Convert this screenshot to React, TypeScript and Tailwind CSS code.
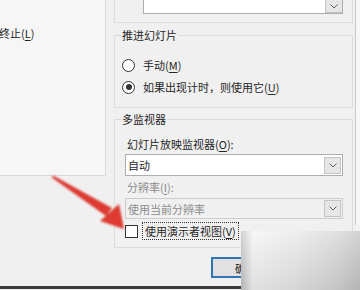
import { FC, ReactNode } from "react";

const font = {
  fontFamily: '"Microsoft YaHei", "Noto Sans CJK SC", "Noto Sans", sans-serif',
};

const Chevron: FC = () => (
  <svg width="8" height="5" viewBox="0 0 8 5" fill="none">
    <path d="M0.5 0.5 L4 4 L7.5 0.5" stroke="#606060" strokeWidth="1" />
  </svg>
);

// 下拉按钮
const DropButton: FC = () => (
  <div className="flex items-center justify-center w-[17px] h-[17px] bg-[#e6e6e6] border border-[#c4c4c4]">
    <Chevron />
  </div>
);

const Key: FC<{ k: string }> = ({ k }) => (
  <>
    (<span className="underline underline-offset-2">{k}</span>)
  </>
);

const Radio: FC<{ checked?: boolean; children: ReactNode }> = ({ checked, children }) => (
  <div className="flex items-center h-[20px]">
    <div className="flex items-center justify-center w-[13px] h-[13px] rounded-full border border-[#333] bg-white">
      {checked && <div className="w-[6px] h-[6px] rounded-full bg-[#333]" />}
    </div>
    <span className="ml-[8px] leading-[16px]">{children}</span>
  </div>
);

const App: FC = () => {
  return (
    <div
      className="relative w-[360px] h-[290px] overflow-hidden bg-[#f0f0f0] text-[11px] text-[#262626]"
      style={font}
    >
      <div className="flex h-[248px]">
        {/* 左侧面板 */}
        <div className="w-[106px] h-[176px] bg-[#f6f6f6] border-r border-b border-[#dadada]">
          <div className="mt-[25px] leading-[16px] -ml-[1px]">
            终止<Key k="L" />
          </div>
        </div>

        {/* 右侧设置 */}
        <div className="ml-[8px] w-[239px] flex flex-col">
          <div className="h-[23px] border-l border-r border-b border-[#dcdcdc]">
            <div className="ml-[28px] w-[200px] h-[14px] flex justify-end items-end border-l border-r border-b border-[#adadad] bg-white">
              <div className="flex items-center justify-center w-[17px] h-[13px] bg-[#e6e6e6] border-l border-b border-[#c4c4c4]">
                <Chevron />
              </div>
            </div>
          </div>

          <fieldset className="mt-[4px] border border-[#dcdcdc] pl-[7px] pb-[10px]">
            <legend className="-ml-[1px] px-[1px] leading-[16px]">推进幻灯片</legend>
            <div className="mt-[12px] flex flex-col gap-[2px]">
              <Radio>
                手动<Key k="M" />
              </Radio>
              <Radio checked>
                如果出现计时，则使用它<Key k="U" />
              </Radio>
            </div>
          </fieldset>

          <fieldset className="mt-[3px] border border-[#dcdcdc] pl-[10px] pr-[9px] pb-[7px]">
            <legend className="-ml-[4px] px-[1px] leading-[16px]">多监视器</legend>
            <div className="mt-[9px] ml-[2px] leading-[16px]">
              幻灯片放映监视器<Key k="O" />:
            </div>
            <div className="mt-[2px] h-[22px] flex items-center justify-between bg-white border border-[#adadad] pl-[2px] pr-[1px]">
              <span className="leading-[16px]">自动</span>
              <DropButton />
            </div>
            <div className="mt-[3px] ml-[2px] leading-[16px] text-[#8c8c8c]">
              分辨率<Key k="I" />:
            </div>
            <div className="mt-[3px] h-[21px] flex items-center justify-between bg-[#f0f0f0] border border-[#cccccc] pl-[2px] pr-[1px]">
              <span className="leading-[16px] text-[#8c8c8c]">使用当前分辨率</span>
              <DropButton />
            </div>
            <div className="mt-[3px] h-[18px] flex items-center">
              <div className="w-[13px] h-[13px] border border-[#333] bg-white" />
              <span className="ml-[4px] px-[2px] h-[18px] leading-[16px] border border-dotted border-[#333]">
                使用演示者视图<Key k="V" />
              </span>
            </div>
          </fieldset>
        </div>

        <div className="ml-[2px] w-px h-[225px] bg-[#c9c9c9]" />
        <div className="flex-1 h-[225px] bg-[#f7f7f7]" />
      </div>

      {/* 确定按钮 */}
      <div className="mt-[9px] ml-[211px] w-[70px] h-[21px] flex items-center justify-center border-2 border-[#2f74b5] bg-[#e1e1e1]">
        <span className="leading-[16px]">确定</span>
      </div>
      <div className="mt-[8px] h-[3px] bg-[#3a3a3a]" />

      {/* 水印遮挡 */}
      <div className="absolute left-[241px] top-[231px] right-0 bottom-0 bg-[linear-gradient(to_right,#c2c2c2,#f3f3f3_10%,#e8e8e8_45%,#d6d6d6_80%,#c4c4c4)]">
        <div className="w-full h-full bg-[linear-gradient(to_bottom,rgba(255,255,255,0.25),rgba(0,0,0,0.08))]" />
      </div>

      {/* 红色箭头 */}
      <svg className="absolute left-0 top-0" width="360" height="290" viewBox="0 0 360 290">
        <defs>
          <filter id="glow" x="-20%" y="-20%" width="140%" height="140%">
            <feGaussianBlur stdDeviation="0.8" />
          </filter>
        </defs>
        <g filter="url(#glow)" fill="#dd3b33">
          <polygon points="51,177 54,176 112,208 106,216" />
          <polygon points="124,229 119,204 100,221" />
        </g>
      </svg>
    </div>
  );
};

export default App;
